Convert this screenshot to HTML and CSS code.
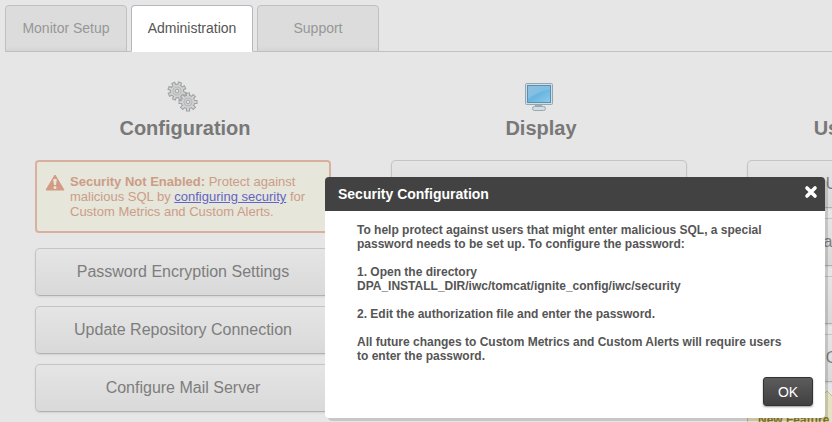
FILE: index.html
```html
<!DOCTYPE html>
<html lang="en">
<head>
<meta charset="utf-8">
<title>Administration</title>
<link rel="stylesheet" href="styles.css">
</head>
<body>
<nav class="tabs">
  <a class="tab" href="#monitor">Monitor Setup</a>
  <a class="tab tab-active" href="#admin">Administration</a>
  <a class="tab" href="#support">Support</a>
</nav>
<main class="columns">
  <section class="column">
    <svg class="icon" viewBox="0 0 34 34" aria-hidden="true">
      <defs>
        <g id="gear">
          <g stroke="#a0a2a3" stroke-width="4.2">
            <path d="M0-9.5V9.5M-9.5 0H9.5M-6.7-6.7L6.7 6.7M-6.7 6.7L6.7-6.7"/>
          </g>
          <circle r="7.2" fill="#a0a2a3"/>
          <g stroke="#d3d5d5" stroke-width="2">
            <path d="M0-8.5V8.5M-8.5 0H8.5M-6-6L6 6M-6 6L6-6"/>
          </g>
          <circle r="6.2" fill="#cfd1d1"/>
          <circle r="4" fill="#d0d2d2" stroke="#b5b7b8"/>
          <circle r="1.8" fill="#e2e2e2" stroke="#a3a5a6"/>
        </g>
      </defs>
      <use href="#gear" transform="translate(11 11) rotate(20)"/>
      <use href="#gear" transform="translate(22 22)"/>
    </svg>
    <h2 class="heading">Configuration</h2>
    <div class="warning">
      <svg class="warning-icon" viewBox="0 0 20 17" aria-hidden="true">
        <path d="M10 1L19 16H1Z" fill="#d39a84" stroke="#d39a84" stroke-linejoin="round"/>
        <path d="M8.2 5.500Q10 4 11.800 5.500L11 11H9Z" fill="#e6e6da"/>
        <circle cx="10" cy="13.400" r="1.500" fill="#e6e6da"/>
      </svg>
      <p class="warning-text"><strong>Security Not Enabled:</strong> Protect against malicious SQL by <a class="link" href="#security">configuring security</a> for Custom Metrics and Custom Alerts.</p>
    </div>
    <div class="buttons">
      <button class="button">Password Encryption Settings</button>
      <button class="button">Update Repository Connection</button>
      <button class="button">Configure Mail Server</button>
    </div>
  </section>
  <section class="column">
    <svg class="icon" viewBox="0 0 34 34" aria-hidden="true">
      <defs>
        <linearGradient id="screen" x1="0" y1="0" x2="1" y2="1">
          <stop offset="0" stop-color="#7fb5dc"/>
          <stop offset=".5" stop-color="#69b5df"/>
          <stop offset="1" stop-color="#8acbea"/>
        </linearGradient>
      </defs>
      <path d="M13 25H20V28H13Z" fill="#9eacb4"/>
      <rect x="10.500" y="26.500" width="13" height="4" rx="2" fill="#d2dce1" stroke="#98a7b0"/>
      <rect x="3.500" y="3.500" width="27" height="21" rx="1" fill="#d2dde3" stroke="#93a7b3"/>
      <rect x="5.500" y="5.500" width="23" height="17" fill="url(#screen)" stroke="#5e8fae"/>
      <path d="M6 6H28V9Q15 12 6 19Z" fill="#fff" opacity=".14"/>
    </svg>
    <h2 class="heading">Display</h2>
    <div class="buttons">
      <button class="button" aria-label="Display options"></button>
    </div>
  </section>
  <section class="column">
    <div class="icon"></div>
    <h2 class="heading">Users &amp; Contacts</h2>
    <div class="buttons">
      <button class="button">User Administration</button>
      <button class="button">Manage Email Contacts</button>
      <button class="button">License Keys</button>
      <button class="button">Configure Accounts</button>
    </div>
    <aside class="feature">
      <svg class="feature-arrow" viewBox="0 0 26 14" aria-hidden="true">
        <path d="M0 14L13 1L26 14" fill="#e5e2c3" stroke="#c3bd8b"/>
      </svg>
      <strong>New Feature</strong>
    </aside>
  </section>
</main>
<div class="dialog" role="dialog" aria-labelledby="dialog-title">
  <header class="dialog-header">
    <h1 class="dialog-title" id="dialog-title">Security Configuration</h1>
    <button class="close" aria-label="Close">
      <svg class="close-icon" viewBox="0 0 14 14" aria-hidden="true"><path d="M3 3L11 11M11 3L3 11" stroke="#fff" stroke-width="3.600" stroke-linecap="round"/></svg>
    </button>
  </header>
  <div class="dialog-body">
    <p>To help protect against users that might enter malicious SQL, a special password needs to be set up. To configure the password:</p>
    <p>1. Open the directory<br>DPA_INSTALL_DIR/iwc/tomcat/ignite_config/iwc/security</p>
    <p>2. Edit the authorization file and enter the password.</p>
    <p>All future changes to Custom Metrics and Custom Alerts will require users to enter the password.</p>
  </div>
  <footer class="dialog-footer"><button class="ok">OK</button></footer>
</div>
</body>
</html>
```
FILE: styles.css
```css
* { box-sizing: border-box; }

body {
  margin: 0;
  overflow: hidden;
  background: #e6e6e6;
  font-family: "Liberation Sans", Arial, sans-serif;
}

h1, h2, p { margin: 0; }

button { font-family: inherit; }

.tabs {
  display: flex;
  gap: 4px;
  margin-left: 5px;
  padding-top: 5px;
  border-bottom: 1px solid #c0c0c0;
}

.tab {
  width: 122px;
  height: 47px;
  margin-bottom: -1px;
  border: 1px solid #c0c0c0;
  border-radius: 4px 4px 0 0;
  background: linear-gradient(#dcdcdc 90%, #d4d4d4);
  color: #979797;
  font-size: 14px;
  line-height: 45px;
  text-align: center;
  text-decoration: none;
}

.tab-active {
  border-color: #b5b5bd;
  border-bottom-color: #fff;
  background: #fff;
  color: #555;
}

.columns {
  display: grid;
  grid-template-columns: repeat(3, minmax(296px, 1fr));
  gap: 60px;
  padding: 28px 35px;
}

.column {
  display: flex;
  flex-direction: column;
}

.icon {
  width: 34px;
  height: 34px;
  align-self: center;
}

.heading {
  margin-bottom: 18px;
  padding-left: 4px;
  color: #787878;
  font-size: 20px;
  line-height: 28px;
  text-align: center;
}

.warning {
  display: flex;
  gap: 5px;
  margin-bottom: 15px;
  padding: 12px 8px;
  border: 2px solid #d9b0a0;
  border-radius: 4px;
  background: #e6e6da;
  color: #cc9c89;
}

.warning-icon {
  width: 20px;
  height: 17px;
  flex: none;
}

.warning-text {
  font-size: 13px;
  line-height: 15px;
}

.link { color: #6464c4; }

.buttons {
  display: flex;
  flex-direction: column;
  gap: 10px;
}

.button {
  height: 48px;
  border: 1px solid #c4c4c4;
  border-bottom-color: #b0b0b0;
  border-radius: 5px;
  background: linear-gradient(#e5e5e5, #d9d9d9);
  box-shadow: 0 1px 2px #d2d2d2;
  color: #7d7d7d;
  font-size: 16px;
}

.feature {
  position: relative;
  margin-top: 21px;
  padding: 8px 10px;
  border: 1px solid #c3bd8b;
  background: #e5e2c3;
  color: #8b7a20;
  font-size: 12px;
  line-height: 16px;
}

.feature-arrow {
  position: absolute;
  top: -14px;
  left: 66px;
  width: 26px;
  height: 14px;
}

.dialog {
  position: absolute;
  top: 177px;
  left: 325px;
  width: 500px;
  border-radius: 4px;
  background: #fff;
  box-shadow: 3px 3px 0 #0002;
}

.dialog-header {
  display: flex;
  align-items: center;
  justify-content: space-between;
  height: 34px;
  padding: 0 7px 0 13px;
  border-radius: 4px 4px 0 0;
  background: #424242;
}

.dialog-title {
  color: #fff;
  font-size: 14px;
}

.close {
  display: flex;
  padding: 0 0 4px;
  border: 0;
  background: none;
}

.close-icon {
  width: 14px;
  height: 14px;
}

.dialog-body {
  display: flex;
  flex-direction: column;
  gap: 14px;
  padding: 12px 32px 0;
  color: #555;
  font-size: 12px;
  font-weight: bold;
  line-height: 14px;
}

.dialog-footer {
  display: flex;
  justify-content: flex-end;
  padding: 14px 12px 12px;
}

.ok {
  width: 50px;
  height: 29px;
  padding: 0;
  border: 1px solid #333;
  border-radius: 3px;
  background: linear-gradient(#5c5c5c, #404040);
  box-shadow: 0 1px 2px #999;
  color: #fff;
  font-size: 14px;
}
```
